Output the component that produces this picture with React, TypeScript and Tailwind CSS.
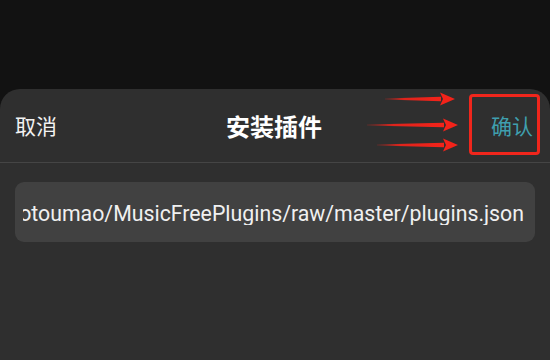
import React from "react";

const CJK = { fontFamily: '"Noto Sans CJK SC", "Noto Sans", sans-serif' };

function Arrow({ x1, x2, y }: { x1: number; x2: number; y: number }) {
  const headLen = 14;
  const hx = x2 - headLen;
  return (
    <g>
      <polygon
        points={`${x1},${y - 0.6} ${hx},${y - 2.2} ${hx},${y + 2.2} ${x1},${y + 0.6}`}
        fill="url(#shaft)"
      />
      <polygon points={`${hx - 1},${y - 6.5} ${x2},${y} ${hx - 1},${y + 6.5} ${hx + 2},${y}`} fill="#f3231a" />
    </g>
  );
}

export default function App() {
  return (
    <div className="relative w-[550px] h-[360px] bg-[#121212] flex flex-col overflow-hidden">
      <div className="h-[89px] shrink-0" />
      <div className="flex-1 rounded-t-[20px] bg-[#2f2f2f] flex flex-col">
        <div className="h-[74px] flex items-center justify-between pl-[15px] pr-[17px] border-b border-[#454545]" style={CJK}>
          <span className="text-[21px] text-[#f2f2f2] leading-none">取消</span>
          <span className="text-[24px] font-bold text-white leading-none">安装插件</span>
          <span className="text-[21px] text-[#3f9fae] leading-none">确认</span>
        </div>
        <div className="mx-[15px] mt-[19px] h-[60px] rounded-[9px] bg-[#414141] flex items-center pl-[8px] pr-[11px] pt-[4px]">
          <div className="flex-1 min-w-0 overflow-hidden flex justify-end">
            <span
              className="whitespace-nowrap text-[21.3px] text-[#f0f0f0] leading-none"
              style={{ fontFamily: 'Roboto, "Liberation Sans", sans-serif' }}
            >
              https://gitee.com/maotoumao/MusicFreePlugins/raw/master/plugins.json
            </span>
          </div>
        </div>
      </div>
      <div className="absolute left-[469px] top-[94px] w-[71px] h-[61px] border-[3px] border-[#f0261c] rounded-[4px]" />
      <svg className="absolute left-0 top-0" width="550" height="360" viewBox="0 0 550 360">
        <defs>
          <linearGradient id="shaft" x1="0" x2="1" y1="0" y2="0">
            <stop offset="0" stopColor="#f3231a" stopOpacity="0.2" />
            <stop offset="0.35" stopColor="#f3231a" stopOpacity="0.9" />
            <stop offset="1" stopColor="#f3231a" />
          </linearGradient>
        </defs>
        <Arrow x1={385} x2={455} y={99} />
        <Arrow x1={367} x2={458} y={125} />
        <Arrow x1={377} x2={458} y={145} />
      </svg>
    </div>
  );
}
